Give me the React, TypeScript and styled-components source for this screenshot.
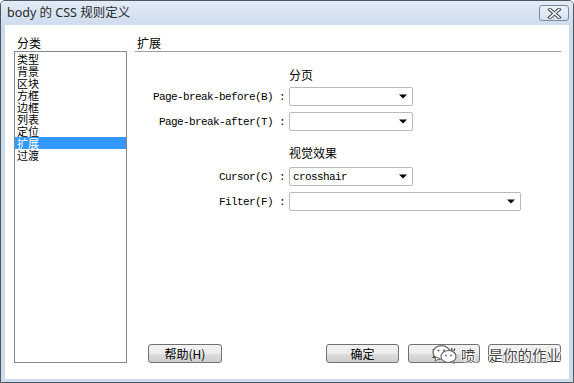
import React from "react";
import styled, { createGlobalStyle } from "styled-components";

const GlobalStyle = createGlobalStyle`
  html, body { margin: 0; padding: 0; background: #ffffff; }
  body { width: 574px; height: 383px; overflow: hidden; }
`;

const CJK = `"Noto Sans CJK SC", "Noto Sans", sans-serif`;
const MONO = `"Liberation Mono", "Noto Sans CJK SC", monospace`;

const Window = styled.div`
  position: relative;
  box-sizing: border-box;
  width: 574px;
  height: 383px;
  border: 1px solid #4f5660;
  border-radius: 5px 5px 0 0;
  background: #cddced;
  display: flex;
  flex-direction: column;
  font-family: ${CJK};
  font-size: 12px;
  color: #000;
`;

const TitleBar = styled.div`
  height: 24px;
  flex: none;
  display: flex;
  align-items: flex-start;
  justify-content: space-between;
  padding: 0 4px 0 6px;
  border-radius: 4px 4px 0 0;
  background: linear-gradient(#e2ebf6, #cddcee);
`;

const Title = styled.div`
  font-family: "Noto Sans", "Noto Sans CJK SC", sans-serif;
  font-size: 12.5px;
  line-height: 24px;
  color: #2a2a2a;
`;

const CloseButton = styled.div`
  margin-top: 4px;
  box-sizing: border-box;
  width: 30px;
  height: 16px;
  border: 1px solid #7d8a9c;
  border-radius: 3px;
  background: linear-gradient(#edf2f8, #d6e1ee);
  display: flex;
  align-items: center;
  justify-content: center;
`;

const Body = styled.div`
  flex: 1;
  margin: 0 4px 3px 4px;
  background: #ffffff;
  display: flex;
  padding: 10px 8px 16px 9px;
`;

const LeftCol = styled.div`
  width: 113px;
  flex: none;
  display: flex;
  flex-direction: column;
`;

const PanelLabel = styled.div`
  height: 16px;
  line-height: 16px;
  padding-left: 3px;
  font-size: 12px;
`;

const ListBox = styled.div`
  flex: 1;
  box-sizing: border-box;
  border: 1px solid #828790;
  padding-top: 1px;
  display: flex;
  flex-direction: column;
`;

const ListItem = styled.div<{ $selected?: boolean }>`
  height: 12px;
  line-height: 12px;
  padding-left: 2px;
  font-size: 11px;
  white-space: nowrap;
  background: ${(p) => (p.$selected ? "#3399ff" : "transparent")};
  color: ${(p) => (p.$selected ? "#ffffff" : "#000000")};
`;

const RightCol = styled.div`
  flex: 1;
  margin-left: 8px;
  display: flex;
  flex-direction: column;
`;

const Heading = styled.div`
  height: 16px;
  line-height: 16px;
  padding-left: 2px;
  border-bottom: 1px solid #a0a0a0;
  font-size: 12px;
`;

const Form = styled.div`
  display: flex;
  flex-direction: column;
  margin-top: 14px;
`;

const SectionTitle = styled.div<{ $top: number }>`
  margin-top: ${(p) => p.$top}px;
  height: 18px;
  line-height: 18px;
  padding-left: 154px;
  font-size: 12px;
`;

const Row = styled.div<{ $top: number }>`
  margin-top: ${(p) => p.$top}px;
  display: flex;
  align-items: center;
  height: 19px;
`;

const Label = styled.div`
  width: 154px;
  box-sizing: border-box;
  padding-right: 4px;
  text-align: right;
  font-family: ${MONO};
  font-size: 11px;
  letter-spacing: -0.6px;
  white-space: pre;
`;

const Select = styled.div<{ $width: number }>`
  box-sizing: border-box;
  width: ${(p) => p.$width}px;
  height: 19px;
  border: 1px solid #b9b9b9;
  border-radius: 2px;
  background: #ffffff;
  display: flex;
  align-items: center;
  justify-content: space-between;
  padding: 0 5px 0 3px;
`;

const SelectValue = styled.span`
  font-family: ${MONO};
  font-size: 11px;
  letter-spacing: -0.6px;
`;

const Footer = styled.div`
  margin-top: auto;
  display: flex;
  align-items: center;
  padding-left: 13px;
`;

const Button = styled.div<{ $width: number; $gap?: number }>`
  box-sizing: border-box;
  width: ${(p) => p.$width}px;
  height: 19px;
  margin-left: ${(p) => p.$gap ?? 0}px;
  border: 1px solid #707070;
  border-radius: 3px;
  background: linear-gradient(#f3f3f3 0%, #ebebeb 50%, #dddddd 51%, #cfcfcf 100%);
  display: flex;
  align-items: center;
  justify-content: center;
  font-size: 12px;
  line-height: 17px;
`;

const Spacer = styled.div`
  flex: 1;
`;

const Watermark = styled.div`
  position: absolute;
  left: 431px;
  top: 344px;
  display: flex;
  align-items: center;
  gap: 3px;
  font-family: ${CJK};
  font-size: 14.5px;
  line-height: 18px;
  color: #444444;
  text-shadow: 1px 0 0 #fff, -1px 0 0 #fff, 0 1px 0 #fff, 0 -1px 0 #fff;
  pointer-events: none;
`;

const WatermarkText = styled.span<{ $gap?: number }>`
  white-space: pre;
  margin-left: ${(p) => p.$gap ?? 0}px;
`;

const Arrow = () => (
  <svg width="8" height="5" viewBox="0 0 8 5">
    <path d="M0 0.5 H8 L4 4.5 Z" fill="#000" />
  </svg>
);

const CloseIcon = () => (
  <svg width="15" height="11" viewBox="0 0 15 11">
    <path d="M3 1.5 L12 9.5 M12 1.5 L3 9.5" stroke="#3d4652" strokeWidth="3.6" strokeLinecap="square" />
    <path d="M3 1.5 L12 9.5 M12 1.5 L3 9.5" stroke="#ffffff" strokeWidth="1.6" strokeLinecap="square" />
  </svg>
);

const WeChatIcon = () => (
  <svg width="26" height="19" viewBox="0 0 26 19">
    <ellipse cx="9.5" cy="7.5" rx="8.5" ry="6.8" fill="#fff" stroke="#6b6b6b" strokeWidth="1.2" />
    <path d="M4 12 L3 16 L8 13.5 Z" fill="#fff" stroke="#6b6b6b" strokeWidth="1" />
    <ellipse cx="16.5" cy="11.5" rx="7.5" ry="6" fill="#fff" stroke="#6b6b6b" strokeWidth="1.2" />
    <path d="M21 16 L22.5 18.5 L18.5 17 Z" fill="#fff" stroke="#6b6b6b" strokeWidth="0.9" />
    <circle cx="6.5" cy="5.5" r="1.1" fill="#6b6b6b" />
    <circle cx="12" cy="5.5" r="1.1" fill="#6b6b6b" />
    <circle cx="14" cy="10.5" r="0.9" fill="#6b6b6b" />
    <circle cx="19" cy="10.5" r="0.9" fill="#6b6b6b" />
  </svg>
);

const categories = ["类型", "背景", "区块", "方框", "边框", "列表", "定位", "扩展", "过渡"];

export default function App() {
  return (
    <>
      <GlobalStyle />
      <Window>
        <TitleBar>
          <Title>body 的 CSS 规则定义</Title>
          <CloseButton>
            <CloseIcon />
          </CloseButton>
        </TitleBar>
        <Body>
          <LeftCol>
            <PanelLabel>分类</PanelLabel>
            <ListBox>
              {categories.map((c) => (
                <ListItem key={c} $selected={c === "扩展"}>
                  {c}
                </ListItem>
              ))}
            </ListBox>
          </LeftCol>
          <RightCol>
            <Heading>扩展</Heading>
            <Form>
              <SectionTitle $top={0}>分页</SectionTitle>
              <Row $top={3}>
                <Label>Page-break-before(B) :</Label>
                <Select $width={124}>
                  <SelectValue />
                  <Arrow />
                </Select>
              </Row>
              <Row $top={6}>
                <Label>Page-break-after(T) :</Label>
                <Select $width={124}>
                  <SelectValue />
                  <Arrow />
                </Select>
              </Row>
              <SectionTitle $top={13}>视觉效果</SectionTitle>
              <Row $top={5}>
                <Label>Cursor(C) :</Label>
                <Select $width={124}>
                  <SelectValue>crosshair</SelectValue>
                  <Arrow />
                </Select>
              </Row>
              <Row $top={6}>
                <Label>Filter(F) :</Label>
                <Select $width={232}>
                  <SelectValue />
                  <Arrow />
                </Select>
              </Row>
            </Form>
            <Footer>
              <Button $width={74}>帮助(H)</Button>
              <Spacer />
              <Button $width={73}>确定</Button>
              <Button $width={72} $gap={9}>取消</Button>
              <Button $width={73} $gap={8} />
            </Footer>
          </RightCol>
        </Body>
        <Watermark>
          <WeChatIcon />
          <WatermarkText>喷</WatermarkText>
          <WatermarkText $gap={10}>是你的作业</WatermarkText>
        </Watermark>
      </Window>
    </>
  );
}
